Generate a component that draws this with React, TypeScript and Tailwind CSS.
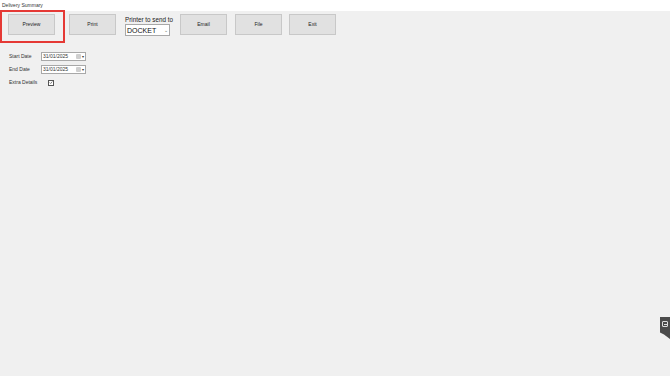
import { FC } from "react";

const Btn: FC<{ label: string; className?: string }> = ({ label, className }) => (
  <button
    type="button"
    className={`w-[47px] h-[21px] bg-[#e1e1e1] border border-[#c8c8c8] text-[5px] text-[#222] flex items-center justify-center ${className ?? ""}`}
  >
    {label}
  </button>
);

const DateBox: FC<{ value: string }> = ({ value }) => (
  <div className="w-[45px] h-[9px] bg-white border border-[#a8a8a8] flex items-center text-[5px] text-[#333] pl-[1px]">
    <span className="flex-1 leading-none">{value}</span>
    <span className="w-[5px] h-[5px] bg-[#cfcfcf] rounded-[1px] mr-[1px]" />
    <span className="text-[4px] leading-none mr-[1px]">▾</span>
  </div>
);

export default function App() {
  return (
    <div
      className="relative w-[670px] h-[376px] bg-[#f0f0f0] overflow-hidden"
      style={{ fontFamily: '"Liberation Sans", Arial, sans-serif' }}
    >
      <div className="h-[11px] bg-white pl-[2px] text-[5px] leading-[11px] text-[#333]">
        Delivery Summary
      </div>

      <div className="flex items-start pl-[8px] pt-[3px]">
        <Btn label="Preview" />
        <Btn label="Print" className="ml-[14px]" />
        <div className="ml-[9px] w-[45px] flex flex-col pt-[2px]">
          <span className="text-[6.3px] leading-[8px] text-[#222] whitespace-nowrap">
            Printer to send to
          </span>
          <div className="w-[45px] h-[12px] bg-white border border-[#a8a8a8] flex items-center px-[1px] text-[7px] text-[#111]">
            <span className="flex-1 leading-none">DOCKET</span>
            <span className="text-[5px] text-[#666] leading-none">⌄</span>
          </div>
        </div>
        <Btn label="Email" className="ml-[10px]" />
        <Btn label="File" className="ml-[8px]" />
        <Btn label="Exit" className="ml-[7px]" />
      </div>

      <div className="flex flex-col pl-[9px] pt-[16px] text-[5px] text-[#333]">
        <div className="flex items-center h-[9px]">
          <span className="w-[32px]">Start Date</span>
          <DateBox value="31/01/2025" />
        </div>
        <div className="flex items-center h-[9px] mt-[4px]">
          <span className="w-[32px]">End Date</span>
          <DateBox value="31/01/2025" />
        </div>
        <div className="flex items-center h-[9px] mt-[4px]">
          <span className="w-[39px]">Extra Details</span>
          <span className="w-[6px] h-[6px] border border-[#555] bg-white flex items-center justify-center">
            <svg viewBox="0 0 6 6" className="w-[5px] h-[5px]">
              <path d="M1 3 L2.5 4.5 L5 1.5" fill="none" stroke="#333" strokeWidth="0.9" />
            </svg>
          </span>
        </div>
      </div>

      <div className="absolute left-0 top-[10px] w-[65px] h-[33px] border-2 border-[#e53935]" />

      <div
        className="absolute left-[660px] top-[317px] w-[10px] h-[22px] bg-[#4b4b4b] flex items-start justify-center pt-[4px]"
        style={{ clipPath: "polygon(0 0, 100% 0, 100% 100%, 40% 80%, 0 70%)" }}
      >
        <span className="w-[6px] h-[6px] border border-[#ddd] rounded-[1px] flex items-center justify-center">
          <span className="w-[3px] h-[1px] bg-[#ddd]" />
        </span>
      </div>
    </div>
  );
}
